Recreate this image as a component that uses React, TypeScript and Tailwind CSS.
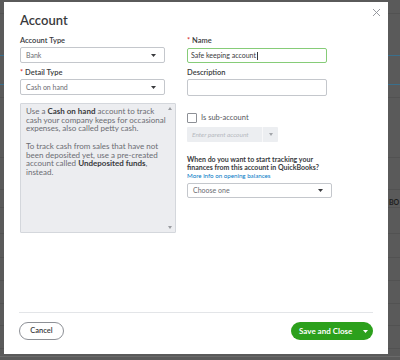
import React from "react";

function Caret({ className = "" }: { className?: string }) {
  return (
    <svg width="5" height="3" viewBox="0 0 5 3" className={className}>
      <path d="M0 0 L5 0 L2.5 3 Z" fill="currentColor" />
    </svg>
  );
}

function Select({ value, className = "" }: { value: string; className?: string }) {
  return (
    <div
      className={`flex items-center justify-between border border-[#c4c7cc] rounded-[2px] bg-white pl-[5px] pr-[8px] ${className}`}
    >
      <span className="text-[7px] text-[#6b6c72]">{value}</span>
      <Caret className="text-[#393a3d]" />
    </div>
  );
}

export default function App() {
  const lines = [13, 97, 157, 189, 207, 233, 257, 280, 303, 325, 348];
  return (
    <div
      className="relative w-[400px] h-[360px] overflow-hidden bg-[#5a5a5a] pl-[4px] pt-[2px]"
      style={{ fontFamily: "Lato, 'Open Sans', Arial, sans-serif" }}
    >
      {lines.map((y) => (
        <div key={y} className="absolute left-0 right-0 h-px bg-[#525252]" style={{ top: y }} />
      ))}
      <div className="absolute left-0 right-0 h-px bg-[#3a6f8c]" style={{ top: 55 }} />
      <div className="absolute left-0 right-0 h-px bg-[#3a6f8c]" style={{ top: 84 }} />
      <div className="absolute left-[389px] top-[199px] text-[7px] font-bold text-[#1e1e1e] leading-none">BO</div>
      <div className="absolute left-0 right-0 top-[356px] h-px bg-[#6a6a6a]" />

      <div className="relative flex flex-col w-[384px] h-[352px] bg-white">
        <button className="absolute left-[368px] top-[6px] text-[#8d9096]">
          <svg width="9" height="9" viewBox="0 0 9 9">
            <path d="M1 1 L8 8 M8 1 L1 8" stroke="currentColor" strokeWidth="0.9" />
          </svg>
        </button>

        <div className="pl-[16px] pt-[10px]">
          <h1 className="text-[13px] leading-[16px] font-semibold text-[#393a3d]">Account</h1>
        </div>

        <div className="grid grid-cols-[156px_145px] gap-x-[11px] pl-[16px] mt-[8px]">
          {/* Left column */}
          <div className="flex flex-col">
            <label className="h-[10px] leading-[10px] text-[7.5px] font-semibold text-[#393a3d]">Account Type</label>
            <Select value="Bank" className="mt-[1px] h-[16px] w-[145px]" />
            <label className="mt-[5px] h-[10px] leading-[10px] text-[7.5px] font-semibold text-[#393a3d]">
              <span className="text-[#d52b1e]">*</span> Detail Type
            </label>
            <Select value="Cash on hand" className="mt-[1px] h-[16px] w-[145px]" />
            <div className="relative mt-[8px] h-[130px] bg-[#ecedf0] border border-[#d4d7dc] rounded-[1px] pl-[5px] pr-[8px] pt-[3px] text-[8px] leading-[8.5px] text-[#6b6c72] whitespace-nowrap">
              <p>
                Use a <b className="text-[#393a3d]">Cash on hand</b> account to track
                <br />
                cash your company keeps for occasional
                <br />
                expenses, also called petty cash.
              </p>
              <p className="mt-[9.5px]">
                To track cash from sales that have not
                <br />
                been deposited yet, use a pre-created
                <br />
                account called <b className="text-[#393a3d]">Undeposited funds</b>,
                <br />
                instead.
              </p>
              <svg width="4" height="3" viewBox="0 0 4 3" className="absolute right-[3px] top-[3px] text-[#9a9ca1]">
                <path d="M0 3 L4 3 L2 0 Z" fill="currentColor" />
              </svg>
              <svg width="4" height="3" viewBox="0 0 4 3" className="absolute right-[3px] bottom-[3px] text-[#9a9ca1]">
                <path d="M0 0 L4 0 L2 3 Z" fill="currentColor" />
              </svg>
            </div>
          </div>

          {/* Right column */}
          <div className="flex flex-col">
            <label className="h-[10px] leading-[10px] text-[7.5px] font-semibold text-[#393a3d]">
              <span className="text-[#d52b1e]">*</span> Name
            </label>
            <div className="mt-[2px] h-[15px] w-[140px] border border-[#86cc78] rounded-[2px] flex items-center pl-[3px]">
              <span className="text-[7px] text-[#393a3d]">Safe keeping account</span>
              <span className="ml-[1px] w-px h-[8px] bg-[#393a3d]" />
            </div>
            <label className="mt-[5px] h-[10px] leading-[10px] text-[7.5px] font-semibold text-[#393a3d]">Description</label>
            <div className="mt-[1px] h-[17px] w-[140px] border border-[#c4c7cc] rounded-[2px]" />

            <div className="mt-[17px] h-[10px] flex items-center gap-[4px]">
              <div className="w-[10px] h-[10px] border border-[#8d9096] rounded-[1px]" />
              <span className="text-[7.5px] text-[#55575d]">Is sub-account</span>
            </div>

            <div className="mt-[4px] h-[15px] w-[91px] flex bg-[#eceef1] rounded-[1px]">
              <div className="flex-1 flex items-center pl-[5px] border-r border-[#f8f8f9]">
                <span className="text-[6.5px] italic text-[#b6b9bf]">Enter parent account</span>
              </div>
              <div className="w-[15px] flex items-center justify-center">
                <svg width="4" height="3" viewBox="0 0 4 3" className="text-[#a3a6ab]">
                  <path d="M0 0 L4 0 L2 3 Z" fill="currentColor" />
                </svg>
              </div>
            </div>

            <p className="mt-[14px] text-[7px] leading-[7.5px] font-bold text-[#393a3d] whitespace-nowrap">
              When do you want to start tracking your
              <br />
              finances from this account in QuickBooks?
            </p>
            <a className="mt-[1px] text-[6.2px] leading-[8px] text-[#0077c5]">More info on opening balances</a>
            <Select value="Choose one" className="mt-[3px] h-[15px] w-[145px]" />
          </div>
        </div>

        <div className="mt-auto px-[15px] pb-[14px]">
          <div className="h-px bg-[#e3e5e8]" />
          <div className="mt-[9px] flex items-center justify-between">
            <button className="h-[18px] w-[45px] rounded-full border border-[#8d9096] text-[7.5px] font-semibold text-[#393a3d]">
              Cancel
            </button>
            <button className="h-[18px] w-[82px] rounded-full bg-[#2ca01c] flex items-center pl-[8px] pr-[5px] justify-between">
              <span className="text-[8px] font-bold text-white">Save and Close</span>
              <Caret className="text-white" />
            </button>
          </div>
        </div>
      </div>
    </div>
  );
}
